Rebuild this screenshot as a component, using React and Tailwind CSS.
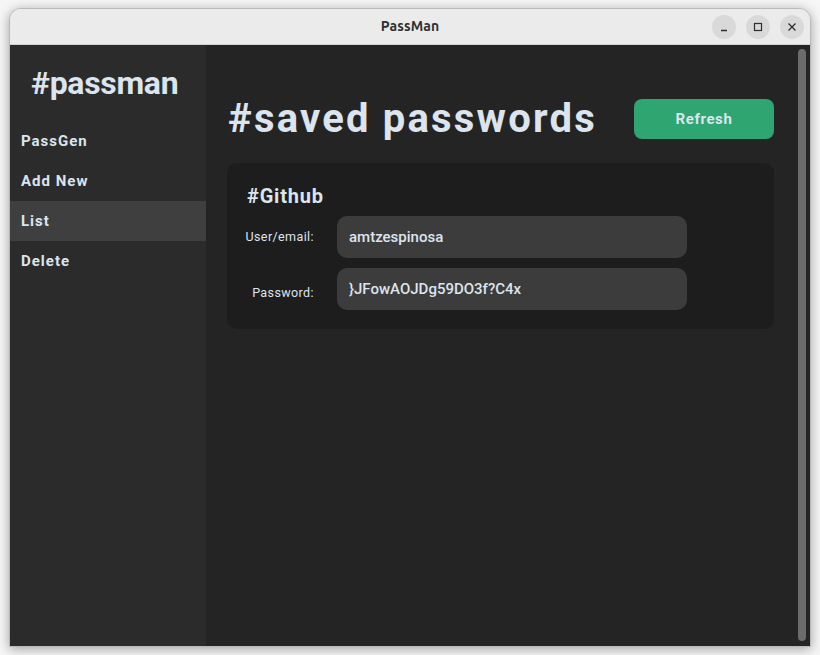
export default function App() {
  const nav = ["PassGen", "Add New", "List", "Delete"];
  return (
    <div className="w-[820px] h-[655px] bg-[#f6f6f6] pl-[9px] pt-[8px] overflow-hidden" style={{ fontFamily: "Roboto, 'Liberation Sans', sans-serif" }}>
      <div className="w-[802px] h-[639px] rounded-t-[12px] border border-[#b9b9b9] bg-[#ebebeb] shadow-[0_2px_12px_rgba(0,0,0,0.35)] flex flex-col overflow-hidden">
        {/* Title bar */}
        <div className="relative h-[36px] shrink-0 flex items-center justify-center border-b border-[#d2d2d2] bg-[#ebebeb]">
          <span className="text-[14px] font-bold text-[#303030] tracking-[0.1px]" style={{ fontFamily: "Ubuntu, 'Noto Sans', 'DejaVu Sans', sans-serif" }}>PassMan</span>
          <div className="absolute right-[6px] top-[6px] flex gap-[10px]">
            <div className="w-[24px] h-[24px] rounded-full bg-[#d9d9d9] flex items-center justify-center">
              <svg width="10" height="10" viewBox="0 0 10 10"><path d="M2 8.5h6" stroke="#2e2e2e" strokeWidth="1.3" /></svg>
            </div>
            <div className="w-[24px] h-[24px] rounded-full bg-[#d9d9d9] flex items-center justify-center">
              <svg width="10" height="10" viewBox="0 0 10 10"><rect x="1.5" y="1.5" width="7" height="7" fill="none" stroke="#2e2e2e" strokeWidth="1.2" /></svg>
            </div>
            <div className="w-[24px] h-[24px] rounded-full bg-[#d9d9d9] flex items-center justify-center">
              <svg width="10" height="10" viewBox="0 0 10 10"><path d="M1.5 1.5l7 7M8.5 1.5l-7 7" stroke="#2e2e2e" strokeWidth="1.3" /></svg>
            </div>
          </div>
        </div>
        {/* Content */}
        <div className="flex flex-1 min-h-0">
          <aside className="w-[196px] shrink-0 bg-[#2b2b2b] flex flex-col">
            <div className="h-[76px] flex items-center pl-[21px]">
              <span className="text-[32px] font-bold text-[#dce4ee] leading-none tracking-[-0.3px]">#passman</span>
            </div>
            <nav className="flex flex-col">
              {nav.map((n) => (
                <div key={n} className={`h-[40px] flex items-center pl-[11px] text-[15px] font-bold tracking-[1px] text-[#dce4ee] ${n === "List" ? "bg-[#3f3f3f]" : ""}`}>
                  {n}
                </div>
              ))}
            </nav>
          </aside>
          <main className="relative flex-1 bg-[#242424] pl-[21px] pr-[36px] pt-[54px]">
            <div className="flex items-center justify-between h-[40px]">
              <h1 className="text-[40px] font-bold text-[#dce4ee] leading-none tracking-[2.2px] pl-[1px]">#saved passwords</h1>
              <button className="w-[140px] h-[40px] rounded-[8px] bg-[#2fa572] text-[15px] font-bold tracking-[0.6px] text-[#dce4ee]">Refresh</button>
            </div>
            <div className="mt-[24px] w-[547px] h-[166px] rounded-[10px] bg-[#1d1d1d] pl-[20px] pt-[20px]">
              <div className="text-[20px] font-bold text-[#dce4ee] leading-[26px] tracking-[0.8px]">#Github</div>
              <div className="mt-[7px] grid grid-cols-[67px_350px] gap-x-[23px] gap-y-[10px] items-center">
                <div className="text-[12.5px] text-[#dce4ee] text-right tracking-[0.4px] -ml-[4px]">User/email:</div>
                <div className="h-[42px] rounded-[10px] bg-[#3c3c3c] flex items-center pl-[12px] text-[15px] font-medium text-[#dce4ee]">amtzespinosa</div>
                <div className="text-[12.5px] text-[#dce4ee] text-right tracking-[0.4px] pt-[8px]">Password:</div>
                <div className="h-[42px] rounded-[10px] bg-[#3c3c3c] flex items-center pl-[12px] text-[15px] font-medium text-[#dce4ee]">{"}JFowAOJDg59DO3f?C4x"}</div>
              </div>
            </div>
            <div className="absolute right-[4px] top-[4px] bottom-[5px] w-[8px] rounded-full bg-[#6b6b6b]" />
          </main>
        </div>
      </div>
    </div>
  );
}
